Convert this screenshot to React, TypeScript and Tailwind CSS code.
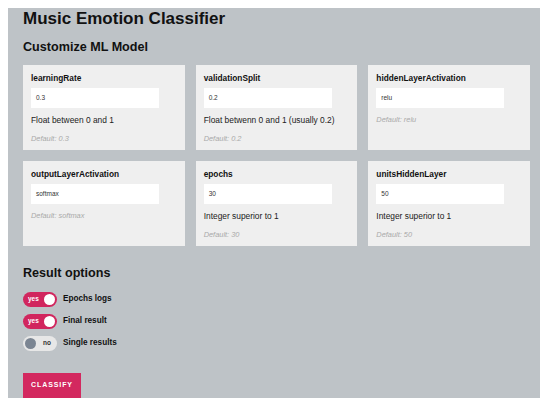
const params = [
  { name: 'learningRate', value: '0.3', desc: 'Float between 0 and 1', def: 'Default: 0.3' },
  { name: 'validationSplit', value: '0.2', desc: 'Float betwenn 0 and 1 (usually 0.2)', def: 'Default: 0.2' },
  { name: 'hiddenLayerActivation', value: 'relu', desc: '', def: 'Default: relu' },
  { name: 'outputLayerActivation', value: 'softmax', desc: '', def: 'Default: softmax' },
  { name: 'epochs', value: '30', desc: 'Integer superior to 1', def: 'Default: 30' },
  { name: 'unitsHiddenLayer', value: '50', desc: 'Integer superior to 1', def: 'Default: 50' },
]

const options = [
  { label: 'Epochs logs', on: true },
  { label: 'Final result', on: true },
  { label: 'Single results', on: false },
]

function Toggle({ on }: { on: boolean }) {
  if (on) {
    return (
      <div className="w-[34px] h-[15px] rounded-full bg-[#d1265e] flex items-center justify-between pl-[5px] pr-[2px]">
        <span className="text-[6.5px] font-bold text-white leading-none">yes</span>
        <span className="w-[11px] h-[11px] rounded-full bg-white" />
      </div>
    )
  }
  return (
    <div className="w-[34px] h-[15px] rounded-full bg-[#e7e7e7] flex items-center justify-between pl-[2px] pr-[6px]">
      <span className="w-[11px] h-[11px] rounded-full bg-[#7b8592]" />
      <span className="text-[6.5px] font-bold text-[#333] leading-none">no</span>
    </div>
  )
}

export default function App() {
  return (
    <div className="w-[550px] h-[406px] bg-white p-2 font-['Liberation_Sans',Arial,sans-serif] text-[#111]">
      <div className="w-[532px] bg-[#bec3c7] pl-[15px] pr-[10px]">
        <h1 className="text-[17px] font-bold leading-[19px] pt-[1px]">Music Emotion Classifier</h1>
        <h2 className="text-[12.6px] font-bold leading-[15px] mt-[12px]">Customize ML Model</h2>

        <div className="grid grid-cols-3 gap-[11px] mt-[10px]">
          {params.map(p => (
            <div key={p.name} className="bg-[#efefef] h-[85px] pt-[8px] px-[8px]">
              <div className="text-[8.3px] font-bold leading-[10px]">{p.name}</div>
              <div className="mt-[5px] w-[128px] h-[20px] bg-white flex items-center pl-[5px] text-[6.5px] text-[#333]">
                {p.value}
              </div>
              {p.desc && (
                <div className="mt-[7px] text-[8.4px] leading-[10px] text-[#222] whitespace-nowrap">{p.desc}</div>
              )}
              <div className={`${p.desc ? 'mt-[9px]' : 'mt-[7px]'} text-[7.4px] italic leading-[9px] text-[#a9a9a9]`}>
                {p.def}
              </div>
            </div>
          ))}
        </div>

        <h2 className="text-[12.6px] font-bold leading-[15px] mt-[20px]">Result options</h2>
        <div className="flex flex-col gap-[7px] mt-[11px]">
          {options.map(o => (
            <div key={o.label} className="flex items-center gap-[6px]">
              <Toggle on={o.on} />
              <span className="text-[8.2px] font-bold leading-none">{o.label}</span>
            </div>
          ))}
        </div>

        <button className="mt-[22px] w-[58px] h-[25px] bg-[#d3285f] text-white text-[7px] font-bold tracking-[0.9px] flex items-center justify-center">
          CLASSIFY
        </button>
      </div>
    </div>
  )
}
